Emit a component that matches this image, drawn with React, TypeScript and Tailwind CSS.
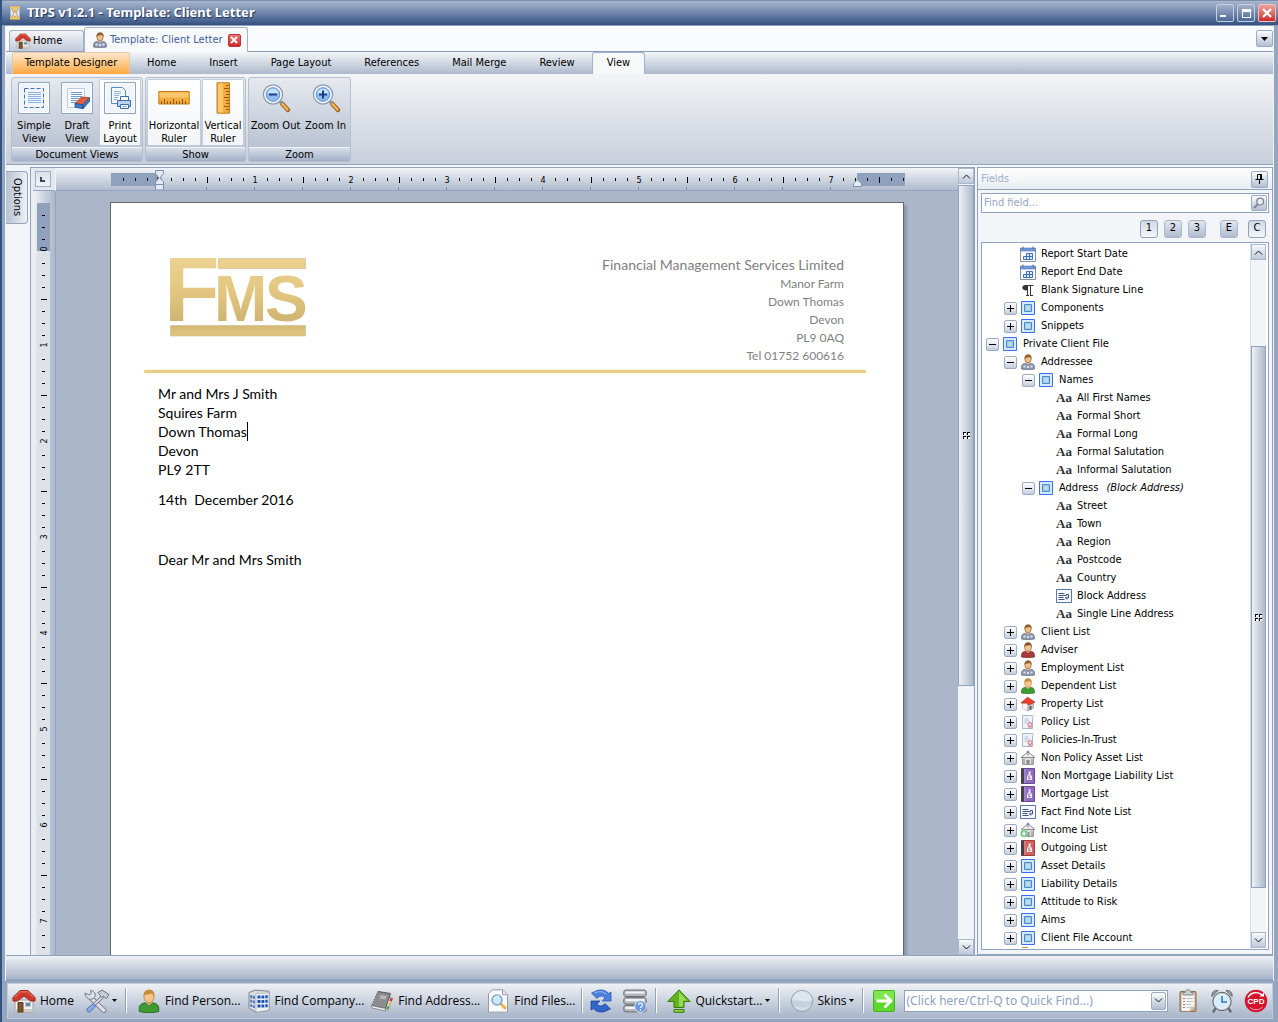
import React from 'react';

const UI = 'font-["DejaVu_Sans_Condensed","DejaVu_Sans",sans-serif]';
const SMALL_BTN =
  'flex shrink-0 items-center justify-center rounded-[2px] border border-[#9aabc6] bg-linear-to-b from-[#fbfcfd] to-[#b3bfd2]';

/* ---------- icons ---------- */

type IconProps = { className?: string };

const HomeIcon = ({ className }: IconProps) => (
  <svg viewBox="0 0 24 24" className={className} aria-hidden="true">
    <path d="M3 11h18v12H3z" fill="#f3f1ee" stroke="#a49e98" />
    <path d="M3 20h18v3H3z" fill="#cfcbc6" />
    <path d="M6 13.500h5V23H6z" fill="#7b5630" stroke="#5b3d1e" />
    <path d="M13.500 13.500h5v4h-5z" fill="#5f86ad" stroke="#c7c7c7" />
    <path d="M1 8.500 8 1.500h8l7 7v3.500h-4.500L12 7l-6.500 5H1z" fill="#d0392a" stroke="#9c2419" />
    <path d="M2.500 8.500 8.500 2.800h7l6 5.700" fill="none" stroke="#ef8476" />
  </svg>
);

const PersonIcon = ({ className, body, edge, hair = '#9a6a3a' }: IconProps & { body: string; edge: string; hair?: string }) => (
  <svg viewBox="0 0 16 16" className={className} aria-hidden="true">
    <path d="M1.500 15v-2c0-2.500 2-3.500 4-3.800L8 11l2.500-1.800c2 .3 4 1.300 4 3.800v2c-3 1-10 1-13 0z" fill={body} stroke={edge} strokeWidth=".6" />
    <path d="M6.200 8h3.600l-.3 1.800L8 11 6.500 9.800z" fill="#e2ac70" />
    <ellipse cx="8" cy="5" rx="3.400" ry="4.200" fill="#f0c58f" stroke={hair} strokeWidth=".6" />
    <path d="M4.500 5.200C4.100 2 5.800.4 8.200.5c2.600 0 3.800 1.800 3.300 4.700-.5-1.500-1.300-2-2.300-2.200-1.500.8-3 .6-3.600.7z" fill={hair} />
  </svg>
);

const ClientIcon = ({ className }: IconProps) => (
  <svg viewBox="0 0 16 16" className={className} aria-hidden="true">
    <path d="M1.500 15v-2c0-2.500 2-3.500 4-3.800L8 11l2.500-1.800c2 .3 4 1.300 4 3.800v2c-3 1-10 1-13 0z" fill="#8a96b0" stroke="#6f788c" strokeWidth=".8" />
    <path d="M6.200 8h3.600L8 11z" fill="#e2ac70" />
    <ellipse cx="8" cy="4.800" rx="3.200" ry="4" fill="#eec08c" stroke="#94602f" strokeWidth=".7" />
    <path d="M4.500 5.200C4.100 2 5.800.4 8.200.5c2.600 0 3.800 1.800 3.300 4.700-.5-1.500-1.300-2-2.300-2.200-1.500.8-3 .6-3.600.7z" fill="#94602f" />
    <path d="M3.500 11.500h2v2h-2zM7 12h2v2H7zM10.500 11.500h2v2h-2z" fill="#dfe6f2" />
  </svg>
);

const BoxIcon = ({ className }: IconProps) => (
  <svg viewBox="0 0 16 16" className={className} aria-hidden="true">
    <path d="M1.500 1.500h13v13h-13z" fill="#d5eafb" stroke="#3c6cf0" />
    <path d="M4.500 4.500h7v7h-7z" fill="#9cc8ec" stroke="#4c8cc0" />
    <path d="M6 6h4v4H6z" fill="#b9daf3" />
  </svg>
);

const CalendarIcon = ({ className }: IconProps) => (
  <svg viewBox="0 0 16 16" className={className} aria-hidden="true">
    <path d="M.5 2.500h15v13H.5z" fill="#fbfbfb" stroke="#8a8f98" />
    <path d="M.5 2h15v3H.5z" fill="#6f97dc" stroke="#5278bb" strokeWidth=".6" />
    <path d="M3 .5v2.500M13 .5v2.500" stroke="#666" />
    <path d="M3.500 10.500h3v3h-3zM6.500 7.500h3v3h-3zM6.500 10.500h3v3h-3zM9.500 7.500h3v3h-3zM9.500 10.500h3v3h-3z" fill="#dcebfb" stroke="#3f6fb4" />
  </svg>
);

const PilcrowIcon = ({ className }: IconProps) => (
  <svg viewBox="0 0 16 16" className={className} aria-hidden="true">
    <path d="M7 3C3.500 2.500 2 4 2.300 6c.3 1.800 2.200 2.600 4.700 2.400z" fill="#33363f" />
    <path d="M6 3.500h7.500M7.500 3.500v10M10.500 3.500v10M6 13.500h3M10 13.500h3" fill="none" stroke="#33363f" />
  </svg>
);

const TextIcon = () => (
  <span className='w-4 shrink-0 text-center font-["Liberation_Serif",serif] text-[13px] leading-4 font-bold text-[#2b3138]'>Aa</span>
);

const NoteIcon = ({ className }: IconProps) => (
  <svg viewBox="0 0 16 16" className={className} aria-hidden="true">
    <path d="M.5 1.500h15v13H.5z" fill="#f5f8fd" stroke="#5a75ab" />
    <path d="M2.500 5.500h6M2.500 7.500h8M2.500 9.500h5M2.500 11.500h6" stroke="#43527a" />
    <path d="M10 6.500h2.500v3.500H9.500M11 8.500 9.500 10l1.500 1.500" fill="none" stroke="#43527a" />
  </svg>
);

const PropertyIcon = ({ className }: IconProps) => (
  <svg viewBox="0 0 16 16" className={className} aria-hidden="true">
    <path d="M2.500 7v5.500L8 15V8z" fill="#f4f4f4" stroke="#aaa" strokeWidth=".6" />
    <path d="M8 8v7l5.500-2.800V6.500z" fill="#c9c9c9" stroke="#999" strokeWidth=".6" />
    <path d="M1 7 7.500 1.200 15 6l-6 3-2.500-2z" fill="#e8402c" stroke="#b22414" strokeWidth=".6" />
    <path d="M9.500 10.500l2-.8v3.500l-2 .8z" fill="#555" />
  </svg>
);

const PolicyIcon = ({ className }: IconProps) => (
  <svg viewBox="0 0 16 16" className={className} aria-hidden="true">
    <path d="M2.500 1.500h10c1.500 0 1 2 0 2.500v10.500h-10z" fill="#edf3f9" stroke="#a9b8cb" />
    <path d="M4.500 5h4M4.500 7h5M4.500 9h3" stroke="#b4c2d6" />
    <circle cx="10" cy="10.500" r="2" fill="#f6dada" stroke="#d8707a" />
    <path d="M9 12.500v2M11 12.500v2" stroke="#d8707a" />
  </svg>
);

const BankIcon = ({ className, plus }: IconProps & { plus?: boolean }) => (
  <svg viewBox="0 0 16 16" className={className} aria-hidden="true">
    <path d="M2.500 7.500h11v7h-11z" fill="#dedede" stroke="#9b9b9b" />
    <path d="M1 7.500 8 2l7 5.500z" fill="#ececec" stroke="#8c8c8c" />
    <path d="M4 9v5M12 9v5" stroke="#888" />
    <path d="M6.500 10h3v4.500h-3z" fill="#8b8b8b" />
    <path d="M8 5.500V1M6.300 2.500 8 .8l1.700 1.700" fill="none" stroke="#7287ad" />
    {plus && (
      <>
        <circle cx="4" cy="11.500" r="3.700" fill="#58bf78" stroke="#d9f2df" strokeWidth=".6" />
        <path d="M4 9.300v4.400M1.800 11.500h4.400" stroke="#fff" strokeWidth="1.400" />
      </>
    )}
  </svg>
);

const BookIcon = ({ className, fill, edge }: IconProps & { fill: string; edge: string }) => (
  <svg viewBox="0 0 16 16" className={className} aria-hidden="true">
    <path d="M1.500.5h13v15h-13z" fill={fill} stroke={edge} />
    <path d="M1 .5h3v15H1z" fill="#45404c" />
    <path d="M5 1v14" stroke="#fff" strokeOpacity=".35" />
    <path d="M8.500 3.500H11l-.8 2.500c1.600 1 2.300 3 1.800 6H7c-.3-3 .3-5 1.800-6z" fill="#f4eef8" />
    <path d="M10.300 8c-1.500-.5-1.700.6-1.300 1.300.3.700 0 1.200-.3 1.400h2" fill="none" stroke={edge} strokeWidth=".8" />
  </svg>
);

const PageFrame = ({ children }: { children: React.ReactNode }) => (
  <svg viewBox="0 0 32 32" className="size-8" aria-hidden="true">
    <path d="M.5.5h31v31H.5z" fill="#f1f5fa" stroke="#8fa5c2" />
    <path d="M1.500 1.500h29v29h-29z" fill="none" stroke="#fff" />
    {children}
  </svg>
);

const SimpleViewIcon = () => (
  <PageFrame>
    <path d="M6.500 6.500h19v19h-19z" fill="none" stroke="#3f74b5" strokeDasharray="4 2" />
    <path d="M10 10.500h13M10 12.500h13M10 14.500h13M10 16.500h13M10 18.500h13M10 20.500h13" stroke="#8bb4e2" />
  </PageFrame>
);

const DraftViewIcon = () => (
  <PageFrame>
    <path d="M6.500 6.500h17v19h-17z" fill="#fafcff" stroke="#b8cce4" />
    <path d="M10 10.500h11M10 12.500h11M10 14.500h11M10 16.500h8M10 18.500h6M10 20.500h5" stroke="#6f9cd4" />
    <path d="M14 21.500 20.500 15l8 .8-6.500 7z" fill="#e4603c" stroke="#98321a" strokeWidth=".8" />
    <path d="M14 21.500l8 1.200v4l-8-1.500zM22 22.700l6.500-7v3.800L22 26.700z" fill="#3a7cc4" stroke="#1f4f8b" strokeWidth=".8" />
  </PageFrame>
);

const PrintLayoutIcon = () => (
  <PageFrame>
    <path d="M7.500 5.500h11l3 3v13h-14z" fill="#f6faff" stroke="#5c8ac4" />
    <path d="M10 9.500h7M10 11.500h7M10 13.500h5M10 15.500h4M10 17.500h3" stroke="#8bb4e2" />
    <path d="M16.500 14.500h8v5h-8z" fill="#fff" stroke="#3d6cab" />
    <path d="M13.500 18.500h13v6h-13z" fill="#bdd4ef" stroke="#3d6cab" />
    <path d="M16.500 22.500h8v4h-8z" fill="#fff" stroke="#3d6cab" />
    <path d="M18 24.500h5" stroke="#8bb4e2" />
  </PageFrame>
);

const HRulerIcon = () => (
  <svg viewBox="0 0 32 32" className="size-8" aria-hidden="true">
    <path d="M.8 9.500h30.400v12.500H.8z" fill="#f4ac3c" stroke="#c47a1a" />
    <path d="M1.500 10.500h29v5h-29z" fill="#fbc76c" />
    <path d="M3.500 22v-3M6.500 22v-5M9.500 22v-3M12.500 22v-3M15.500 22v-5M18.500 22v-3M21.500 22v-3M24.500 22v-5M27.500 22v-3" stroke="#94580c" />
  </svg>
);

const VRulerIcon = () => (
  <svg viewBox="0 0 32 32" className="size-8" aria-hidden="true">
    <path d="M10 .8h12.500v30.400H10z" fill="#f4ac3c" stroke="#c47a1a" />
    <path d="M11 1.500h5v29h-5z" fill="#fbc76c" />
    <path d="M22 3.500h-3M22 6.500h-5M22 9.500h-3M22 12.500h-3M22 15.500h-5M22 18.500h-3M22 21.500h-3M22 24.500h-5M22 27.500h-3" stroke="#94580c" />
  </svg>
);

const ZoomIcon = ({ plus }: { plus?: boolean }) => (
  <svg viewBox="0 0 32 32" className="size-8" aria-hidden="true">
    <path d="M22 21.500l6 6.500" stroke="#9b6220" strokeWidth="4.400" strokeLinecap="round" />
    <path d="M22 21.500l5.500 6" stroke="#f5b95c" strokeWidth="2.400" strokeLinecap="round" />
    <path d="M19 18.500l3 3" stroke="#8d93a0" strokeWidth="3" />
    <circle cx="13" cy="12.500" r="9.600" fill="#f4f7fb" stroke="#8a97ad" strokeWidth="1.200" />
    <circle cx="13" cy="12.500" r="6.800" fill="#8cbcf2" stroke="#5f8fd0" />
    <path d="M7.300 11a6 6 0 0 1 11.400 0c-4 1.500-8 1.500-11.400 0z" fill="#c5e0fc" />
    <path d={plus ? 'M9 12.500h8M13 8.500v8' : 'M9 12.500h8'} stroke="#1f3c80" strokeWidth="2" />
  </svg>
);

const ToolsIcon = ({ className }: IconProps) => (
  <svg viewBox="0 0 26 24" className={className} aria-hidden="true">
    <path d="M8 10l12 11.500" stroke="#707680" strokeWidth="5" strokeLinecap="round" />
    <path d="M8 10l12 11.500" stroke="#dde1e6" strokeWidth="3.200" strokeLinecap="round" />
    <path d="M6.500 1.500c3 0 5.500 2.500 4.500 6-1 2.800-5 3.500-7.500 1.700C1.500 7.500 1 5.500 1.200 4l3.800 2 2.200-1.500z" fill="#dde1e6" stroke="#707680" />
    <path d="M19 7.500 9 16.500" stroke="#707680" strokeWidth="3.200" />
    <path d="M19 7.500 9 16.500" stroke="#eceef1" strokeWidth="1.600" />
    <path d="M14 3.500 18 1l7 4.500-2.500 4-3.500-2.500-1.500 1.500z" fill="#c9cdd3" stroke="#70767e" />
    <path d="M9.500 14.500l2 2.500-5 5.500c-2 1.500-4.500-.5-3.500-2.500z" fill="#84aef0" stroke="#4d6fae" />
  </svg>
);

const CompanyIcon = ({ className }: IconProps) => (
  <svg viewBox="0 0 24 24" className={className} aria-hidden="true">
    <path d="M2 3.500 8 1.200l14 1v19l-13 2-7-4z" fill="#d9dce0" stroke="#80858d" />
    <path d="M9 4.500 22 4v17.200l-13 2z" fill="#eef0f2" stroke="#9a9fa7" strokeWidth=".6" />
    <path d="M10.500 6.500h3v3h-3zM14.500 6.400h2.800v3h-2.800zM18.300 6.300h2.400v3h-2.400zM10.500 11h3v3h-3zM14.500 10.900h2.800v3h-2.800zM18.300 10.700h2.400v3h-2.400zM10.500 15.500h3v3h-3zM14.500 15.400h2.800v3h-2.800zM18.300 15.200h2.400v3h-2.400z" fill="#1d50b4" />
    <path d="M3.300 6l1.900.4v3l-1.900-.5zM5.900 6.700l1.900.4v3l-1.900-.6zM3.300 10.500l1.900.5v3l-1.900-.7zM5.900 11.300l1.900.4v3l-1.900-.6zM3.300 15l1.900.7v2.500l-1.900-.7zM5.900 16l1.900.7v2.500l-1.900-.7z" fill="#4773bd" />
  </svg>
);

const AddressIcon = ({ className }: IconProps) => (
  <svg viewBox="0 0 24 24" className={className} aria-hidden="true">
    <path d="M18 8l5 1-5.500 12-2-1z" fill="#e9e9e9" stroke="#9b9b9b" strokeWidth=".8" />
    <path d="M20.300 9l2.500.4-1.300 3-2.300-.6z" fill="#d23c2a" />
    <path d="M19 13l2.300.5-1.300 3-2.100-.8z" fill="#f0c02c" />
    <path d="M17.600 17l2.100.6-1.500 3.200-2-.8z" fill="#3ea04a" />
    <path d="M8 2.500 20.500 4.500 15.500 19.500 1.500 16.500z" fill="#8b8d90" stroke="#55585c" />
    <path d="M1.500 16.500l14 3v2.500L2 19z" fill="#f2f2f2" stroke="#77797c" strokeWidth=".8" />
    <path d="M10.500 6l6 1-1 3.500-6-1z" fill="#b4b6b9" />
    <path d="M7 3 1.500 16" stroke="#d8d8d8" strokeWidth="1.500" strokeDasharray="1.500 1.200" />
  </svg>
);

const FilesIcon = ({ className }: IconProps) => (
  <svg viewBox="0 0 24 24" className={className} aria-hidden="true">
    <path d="M6.500.8h10l5 5v17.400h-19V4.800z" fill="#f8f9fa" stroke="#989ca3" />
    <path d="M16.500.8v5h5" fill="#dfe2e6" stroke="#989ca3" />
    <path d="M14.500 14.500l4.500 4.500" stroke="#edb548" strokeWidth="3" strokeLinecap="round" />
    <circle cx="11" cy="11" r="5" fill="#c6e6fa" stroke="#7fa8cc" strokeWidth="1.600" />
    <path d="M8 10a3.500 3.500 0 0 1 5-2.500" fill="none" stroke="#fff" />
  </svg>
);

const RefreshIcon = ({ className }: IconProps) => (
  <svg viewBox="0 0 24 24" className={className} aria-hidden="true">
    <path d="M2.500 4 6 2.500C11-.3 17 1 19.500 4.500L22 3v9h-9l3-3c-2-2.800-6-2.500-8 .5z" fill="#4a80dc" stroke="#2c5cb4" strokeWidth=".8" />
    <path d="M21.500 20 18 21.500C13 24.300 7 23 4.500 19.500L2 21v-9h9l-3 3c2 2.800 6 2.500 8-.5z" fill="#2f66c8" stroke="#1d4796" strokeWidth=".8" />
    <path d="M5.500 4c4-2 9-2 12 1.500" fill="none" stroke="#9bbcf2" />
  </svg>
);

const DatabaseIcon = ({ className }: IconProps) => (
  <svg viewBox="0 0 24 24" className={className} aria-hidden="true">
    <rect x=".8" y="1" width="22.400" height="6.500" rx="2" fill="#b4b8bd" stroke="#686c73" />
    <rect x=".8" y="8.700" width="22.400" height="6.500" rx="2" fill="#b4b8bd" stroke="#686c73" />
    <rect x=".8" y="16.400" width="22.400" height="6.500" rx="2" fill="#b4b8bd" stroke="#686c73" />
    <path d="M2.500 3.500h19M2.500 11.200h19M2.500 18.900h19" stroke="#f3f4f5" strokeWidth="2.200" />
    <circle cx="17.500" cy="17.500" r="5.800" fill="#6a98e0" stroke="#dfe9fa" />
    <path d="M15.500 16c0-2.500 4-2.500 4 0 0 1.500-2 1.500-2 3M17.500 20v1.500" fill="none" stroke="#fff" strokeWidth="1.300" />
  </svg>
);

const UpIcon = ({ className }: IconProps) => (
  <svg viewBox="0 0 24 24" className={className} aria-hidden="true">
    <path d="M12 .8 23.200 12.500H17V18.500H7V12.500H.8z" fill="#62b41c" stroke="#3b7d0c" />
    <path d="M12 2.800 20 11.500h-4v6h-4z" fill="#9cd85a" />
    <path d="M7 20.500h10v2.800H7z" fill="#8fd144" stroke="#3b7d0c" />
  </svg>
);

const SphereIcon = ({ className }: IconProps) => (
  <svg viewBox="0 0 24 24" className={className} aria-hidden="true">
    <circle cx="12" cy="12" r="10.700" fill="#c3d2dc" stroke="#94a6b4" />
    <path d="M2 11.500C3 5 8 2 12 2c5 0 9.500 4 10 9-6 4-14-1-20 .5z" fill="#dce7ed" />
    <path d="M4 17c4 5 12 5 16 0-5 2-11 2-16 0z" fill="#d6e3ea" />
  </svg>
);

const GoIcon = ({ className }: IconProps) => (
  <svg viewBox="0 0 24 24" className={className} aria-hidden="true">
    <rect x="1.500" y="1.500" width="21" height="21" rx="1" fill="#5cd82c" stroke="#48b01c" />
    <path d="M2 2h20v9H2z" fill="#7fe650" />
    <path d="M4.500 12h14M12.500 5.500 19 12l-6.500 6.500" fill="none" stroke="#fff" strokeWidth="2.800" />
  </svg>
);

const ClipboardIcon = ({ className }: IconProps) => (
  <svg viewBox="0 0 24 24" className={className} aria-hidden="true">
    <rect x="4" y="2.500" width="16" height="20" rx="1" fill="#c4a182" stroke="#8e6a48" />
    <path d="M5.500 4.500h13V18l-4 4h-9z" fill="#f6f6f5" stroke="#d6d2cc" strokeWidth=".6" />
    <path d="M9 3.500c0-3.500 6-3.500 6 0h2v2.500H7V3.500z" fill="#c9ccd0" stroke="#878b90" />
    <path d="M7 9.500h2M7 12.500h2M7 15.500h2M7 18.500h2" stroke="#da6b5e" />
    <path d="M10.500 9.500H17M10.500 12.500H17M10.500 15.500H15M10.500 18.500h3" stroke="#b8bcc2" />
    <path d="M14.500 22v-4h4z" fill="#dcdcda" stroke="#a6a29c" strokeWidth=".6" />
  </svg>
);

const ClockIcon = ({ className }: IconProps) => (
  <svg viewBox="0 0 24 24" className={className} aria-hidden="true">
    <path d="M5.500 19.500 3.500 22.500M18.500 19.500 20.500 22.500" stroke="#666b72" strokeWidth="2.400" strokeLinecap="round" />
    <path d="M2 7.500C1.500 3.500 4 .8 8 1.500zM22 7.500C22.500 3.500 20 .8 16 1.500z" fill="#9a9fa6" stroke="#5f646b" />
    <circle cx="12" cy="12.500" r="9.200" fill="#c2c7cc" stroke="#62676e" />
    <circle cx="12" cy="12.500" r="7.300" fill="#d4edff" stroke="#eef7fd" />
    <path d="M12 7v6h5" fill="none" stroke="#3878b4" strokeWidth="1.600" />
  </svg>
);

const CpdIcon = ({ className }: IconProps) => (
  <svg viewBox="0 0 24 24" className={className} aria-hidden="true">
    <circle cx="12" cy="12" r="11.200" fill="#d4142c" />
    <path d="M4 8.500a9 9 0 0 1 14.500-2" fill="none" stroke="#fff" strokeWidth="1.400" />
    <path d="M15.500 7.500h4.500V3.500z" fill="#fff" />
    <path d="M6 18.500a9 9 0 0 0 12.500-.5" fill="none" stroke="#f49aa6" strokeWidth="1" />
    <text x="12" y="15" textAnchor="middle" fontFamily="Liberation Sans, sans-serif" fontSize="8" fontWeight="700" fill="#fff">CPD</text>
  </svg>
);

const HourglassIcon = ({ className }: IconProps) => (
  <svg viewBox="0 0 12 14" className={className} aria-hidden="true">
    <path d="M1.500 1.500h9v11h-9z" fill="#dbe8f9" />
    <path d="M2.500 2h7L6.800 7l2.700 5h-7l2.700-5z" fill="#fff" stroke="#8d6b2a" strokeWidth=".7" />
    <path d="M4 3.500h4L6 7zM3.500 11.500h5L6 9z" fill="#e9a82c" />
    <path d="M1 1.500h10M1 12.500h10" stroke="#f2c65a" strokeWidth="1.800" />
  </svg>
);

const Caret = ({ className = 'h-[3px] w-[5px]' }: IconProps) => (
  <svg viewBox="0 0 6 3" className={className} preserveAspectRatio="none" aria-hidden="true">
    <path d="M0 0h6L3 3z" fill="#000" />
  </svg>
);

const Chevron = ({ up }: { up?: boolean }) => (
  <svg viewBox="0 0 9 5" className="h-[5px] w-[9px]" aria-hidden="true">
    <path d={up ? 'M1 4.500 4.500 1 8 4.500' : 'M1 .5 4.500 4 8 .5'} fill="none" stroke="#111" />
  </svg>
);

const SearchIcon = ({ className }: IconProps) => (
  <svg viewBox="0 0 12 12" className={className} aria-hidden="true">
    <circle cx="7.200" cy="4.600" r="3.400" fill="#e9edf2" stroke="#7c8288" strokeWidth="1.200" />
    <path d="M4.700 7.300 1 11" stroke="#7c8288" strokeWidth="1.800" />
  </svg>
);

const PinIcon = () => (
  <svg viewBox="0 0 9 10" className="h-[10px] w-[9px]" aria-hidden="true">
    <path d="M2.500.5h4v5h-4zM.5 5.500h8M4.500 5.500V10" fill="none" stroke="#000" />
    <path d="M5 .5h2v5H5z" fill="#000" />
  </svg>
);

/* ---------- window frame ---------- */

function TitleBar() {
  const btn =
    'flex size-[18px] items-center justify-center rounded-[2px] border border-[#c3cfe2] bg-linear-to-b from-[#a3b2cb] to-[#4e6a97]';
  return (
    <header className="flex h-[26px] shrink-0 items-center border-t border-b border-t-[#7d8fae] border-b-[#8ea0bd] bg-linear-to-b from-[#a9b6cd] via-[#6f86ab] via-50% to-[#34527f] pr-[2px] pl-[7px]">
      <HourglassIcon className="h-[14px] w-3" />
      <h1 className='ml-1.5 grow font-["Noto_Sans",sans-serif] text-[13px] font-bold text-white [text-shadow:1px_1px_1px_#1f3560]'>
        TIPS v1.2.1 - Template: Client Letter
      </h1>
      <div className="flex gap-[3px]">
        <button className={btn} aria-label="Minimize">
          <span className="mt-1.5 mr-1 h-0.5 w-1.5 bg-white" />
        </button>
        <button className={btn} aria-label="Maximize">
          <span className="h-[9px] w-[9px] border border-t-[3px] border-white" />
        </button>
        <button
          className="flex size-[18px] items-center justify-center rounded-[2px] border border-[#eec3c5] bg-linear-to-b from-[#eda29c] to-[#cb2626]"
          aria-label="Close"
        >
          <svg viewBox="0 0 10 10" className="size-2.5" aria-hidden="true">
            <path d="M1 1l8 8M9 1 1 9" stroke="#fff" strokeWidth="2.300" />
          </svg>
        </button>
      </div>
    </header>
  );
}

function DocumentTabs() {
  return (
    <nav className="flex h-[26px] shrink-0 items-end border-b border-[#8c9ebb] bg-[#fafbfd] pl-[3px]">
      <button className="flex h-[21px] w-[75px] items-center gap-0.5 rounded-t-[3px] border border-b-0 border-[#a3b2ca] bg-linear-to-b from-[#f3f5f8] to-[#c1cad9] pl-[5px] text-[11px]">
        <HomeIcon className="size-4" />
        Home
      </button>
      <div className="-mb-px flex h-[25px] items-center rounded-t-[3px] border border-b-0 border-[#a3b2ca] bg-[#f8f9fb] pr-1.5 pl-[7px]">
        <button className="flex items-center gap-0.5 text-[11px] text-[#3f5f96]">
          <ClientIcon className="size-4" />
          Template: Client Letter
        </button>
        <button className="ml-[5px] flex size-[13px] items-center justify-center rounded-[2px] border border-[#c03236] bg-linear-to-b from-[#ee7670] to-[#cc2428]" aria-label="Close tab">
          <svg viewBox="0 0 8 8" className="size-2" aria-hidden="true">
            <path d="M1 1l6 6M7 1 1 7" stroke="#fff" strokeWidth="1.800" />
          </svg>
        </button>
      </div>
      <button className={`${SMALL_BTN} mb-1 ml-auto size-[17px]`} aria-label="Open documents">
        <Caret className="h-1 w-[7px]" />
      </button>
    </nav>
  );
}

const RIBBON_TABS = ['Home', 'Insert', 'Page Layout', 'References', 'Mail Merge', 'Review'];

function RibbonTabs() {
  return (
    <nav className="flex h-[22px] shrink-0 items-stretch gap-px bg-linear-to-b from-[#f4f6f9] to-[#aeb9cc] pl-1.5 text-[11px]">
      <button className="w-[118px] rounded-t-[2px] border border-b-0 border-[#e4c9a4] bg-linear-to-b from-[#fde5cc] via-[#fdc986] to-[#fea63a]">
        Template Designer
      </button>
      {RIBBON_TABS.map((t) => (
        <button key={t} className="px-4">
          {t}
        </button>
      ))}
      <button className="rounded-t-[3px] border border-b-0 border-[#a3b2ca] bg-[#f7f8fa] px-3.5">View</button>
    </nav>
  );
}

function RibbonGroup({ title, children }: { title: string; children: React.ReactNode }) {
  return (
    <section className="flex flex-col rounded-[3px] border border-[#b4c0d2] bg-linear-to-b from-[#e6e9ee] to-[#b2bccd]">
      <div className="flex grow items-start gap-px px-px pt-px">{children}</div>
      <h2 className="flex h-3.5 items-center justify-center border-t border-[#f0f2f6] bg-linear-to-b from-[#d8dee7] to-[#a3b1c8] text-[11px] leading-3">
        {title}
      </h2>
    </section>
  );
}

function RibbonButton({ icon, lines, selected, width }: { icon: React.ReactNode; lines: string[]; selected?: boolean; width: string }) {
  return (
    <button
      aria-pressed={selected}
      className={`flex h-[67px] flex-col items-center rounded-[2px] border pt-0.5 ${width} ${
        selected ? 'border-[#c3ccda] bg-linear-to-b from-white to-[#f3f5f8]' : 'border-transparent'
      }`}
    >
      {icon}
      <span className="mt-[5px] text-[11px] leading-[13px] whitespace-nowrap">
        {lines.map((l) => (
          <span key={l} className="block">
            {l}
          </span>
        ))}
      </span>
    </button>
  );
}

function Ribbon() {
  return (
    <div className="flex h-[91px] shrink-0 items-stretch gap-0.5 border-b border-[#8fa2be] bg-linear-to-b from-[#f3f4f6] to-[#c8cfdb] px-[5px] pt-[3px] pb-0.5">
      <RibbonGroup title="Document Views">
        <RibbonButton width="w-[42px]" icon={<SimpleViewIcon />} lines={['Simple', 'View']} />
        <RibbonButton width="w-[42px]" icon={<DraftViewIcon />} lines={['Draft', 'View']} />
        <RibbonButton width="w-[42px]" icon={<PrintLayoutIcon />} lines={['Print', 'Layout']} selected />
      </RibbonGroup>
      <RibbonGroup title="Show">
        <RibbonButton width="w-[54px]" icon={<HRulerIcon />} lines={['Horizontal', 'Ruler']} selected />
        <RibbonButton width="w-[42px]" icon={<VRulerIcon />} lines={['Vertical', 'Ruler']} selected />
      </RibbonGroup>
      <RibbonGroup title="Zoom">
        <RibbonButton width="w-[51px]" icon={<ZoomIcon />} lines={['Zoom Out']} />
        <RibbonButton width="w-[47px]" icon={<ZoomIcon plus />} lines={['Zoom In']} />
      </RibbonGroup>
    </div>
  );
}

/* ---------- editor ---------- */

const H_TICKS = Array.from({ length: 66 }, (_, i) => i - 3);
const V_TICKS = Array.from({ length: 62 }, (_, i) => i - 3);

function HorizontalRuler() {
  return (
    <div className="h-[23px] overflow-hidden border-b border-[#93a5c0] bg-linear-to-b from-[#f2f4f7] to-[#b0bbcd] pt-[5px] pl-[55px]">
      <div className="relative w-[794px]">
        <div className="flex h-[13px] items-center bg-[linear-gradient(90deg,#8fa1bc_48px,transparent_48px,transparent_746px,#8fa1bc_746px)] pl-1.5">
          {H_TICKS.map((n) => (
            <span key={n} className="flex w-3 shrink-0 justify-center text-[9px] leading-3">
              {n % 8 === 0 ? n / 8 : <span className={n % 4 === 0 ? 'h-1.5 w-px bg-black' : 'h-[3px] w-px bg-black'} />}
            </span>
          ))}
        </div>
        <div className="mt-px flex h-[3px] pl-12">
          {H_TICKS.slice(0, 14).map((n) => (
            <span key={n} className="w-12 border-r border-[#7d92b3]" />
          ))}
        </div>
        <svg viewBox="0 0 9 21" className="absolute -top-[3px] left-11 h-[21px] w-[9px]" aria-hidden="true">
          <path d="M.5.5h8v3l-3.500 4.500 3.500 4v8h-8v-8l3.500-4L.5 3.500zM.5 14.500h8" fill="#e6eaf0" stroke="#7a90b2" />
        </svg>
        <svg viewBox="0 0 9 8" className="absolute top-[6px] left-[742px] h-2 w-[9px]" aria-hidden="true">
          <path d="M.5 7.500v-3L4.500.7l4 3.800v3z" fill="#e6eaf0" stroke="#7a90b2" />
        </svg>
      </div>
    </div>
  );
}

function VerticalRuler() {
  return (
    <div className="flex w-[22px] shrink-0 flex-col overflow-hidden bg-linear-to-r from-[#f0f2f6] to-[#aab7cb] pt-3 pr-[5px] pl-1">
      <div className="flex h-0 grow flex-col overflow-hidden bg-[linear-gradient(180deg,#8fa1bc_48px,#dde2ea_48px)] pt-1.5">
        {V_TICKS.map((n) => (
          <span key={n} className="flex h-3 shrink-0 items-center justify-center text-[9px] leading-3">
            {n % 8 === 0 ? (
              <span className="mb-1 -rotate-90">{n / 8}</span>
            ) : (
              <span className={n % 4 === 0 ? 'h-px w-1.5 bg-black' : 'h-px w-[3px] bg-black'} />
            )}
          </span>
        ))}
      </div>
    </div>
  );
}

function Grip() {
  return (
    <span className="grid grid-cols-2 gap-px">
      {[0, 1, 2, 3].map((i) => (
        <span key={i} className="size-[3px] border-t border-l border-black bg-white" />
      ))}
    </span>
  );
}

const SCROLL_BTN = 'flex h-4 shrink-0 items-center justify-center border border-[#a9b7cd] bg-linear-to-b from-[#f8f9fb] to-[#bfc9d9]';

function FmsLogo() {
  return (
    <svg viewBox="0 0 136 79" className="h-[79px] w-[136px] shrink-0" role="img" aria-label="FMS">
      <defs>
        <linearGradient id="gold" x1="0" y1="0" x2="0" y2="79" gradientUnits="userSpaceOnUse">
          <stop offset="0" stopColor="#ecd190" />
          <stop offset="0.45" stopColor="#e2c67f" />
          <stop offset="0.8" stopColor="#cfb472" />
          <stop offset="1" stopColor="#e3c780" />
        </linearGradient>
      </defs>
      <g fill="url(#gold)" fontFamily="Liberation Sans, Arial, sans-serif" fontWeight="700">
        <path d="M48.500.5h87v10h-87zM.5 67.500h135v10.500H.5z" stroke="#cdb98a" strokeWidth=".6" />
        <text x="-6" y="63" fontSize="91">F</text>
        <text x="44" y="63" fontSize="64">M</text>
        <text x="95" y="63" fontSize="64">S</text>
      </g>
    </svg>
  );
}

function DocumentPage() {
  return (
    <article className='flex w-[794px] flex-none flex-col border border-b-0 border-[#686868] bg-white font-["Lato",sans-serif] shadow-[3px_3px_2px_#8b98ad]'>
      <div className="flex justify-between pt-[53px] pr-[59px] pl-[59px]">
        <div className="pt-0.5">
          <FmsLogo />
        </div>
        <address className="text-right text-[12px] leading-[18px] text-[#7f7f7f] not-italic">
          <div className="mb-px text-[14px]">Financial Management Services Limited</div>
          <div>Manor Farm</div>
          <div>Down Thomas</div>
          <div>Devon</div>
          <div>PL9 0AQ</div>
          <div>Tel 01752 600616</div>
        </address>
      </div>
      <hr className="mt-[5px] mr-[37px] ml-[33px] h-[3px] rounded border-0 bg-[#e9cf85] shadow-[0_0_2px_#f0dca4]" />
      <div className="pt-[11px] pl-[47px] text-[14px] leading-[19px] text-black">
        <p>Mr and Mrs J Smith</p>
        <p>Squires Farm</p>
        <p className="flex">
          Down Thomas
          <span className="w-px bg-black" />
        </p>
        <p>Devon</p>
        <p>PL9 2TT</p>
        <p className="mt-[11px] whitespace-pre">14th  December 2016</p>
        <p className="mt-[41px]">Dear Mr and Mrs Smith</p>
      </div>
    </article>
  );
}

function Editor() {
  return (
    <main className="flex min-w-0 grow overflow-hidden border-t border-r border-l border-[#8fa2be] bg-[#e9edf2] pl-0.5">
      <div className="flex min-w-0 grow flex-col">
        <div className="flex shrink-0">
          <div className="flex w-[22px] shrink-0 items-center justify-center border-b border-[#93a5c0] bg-[#e3e7ee] pr-[3px]">
            <button className="flex size-4 items-center justify-center border border-[#9fb0ca] bg-linear-to-b from-[#dbe1ea] to-[#f2f4f7]" aria-label="Tab stop">
              <span className="size-[5px] border-b-2 border-l-2 border-[#3b4a60]" />
            </button>
          </div>
          <div className="min-w-0 grow border-l border-[#f0f2f6]">
            <HorizontalRuler />
          </div>
        </div>
        <div className="flex min-h-0 grow">
          <VerticalRuler />
          <div className="flex min-w-0 grow overflow-hidden border-l border-[#93a5c0] bg-[#abb7c9] pt-[11px] pl-[54px]">
            <DocumentPage />
          </div>
        </div>
      </div>
      <div className="flex w-4 shrink-0 flex-col bg-[#f2f4f8]">
        <div className={SCROLL_BTN}>
          <Chevron up />
        </div>
        <div className="mt-px flex h-[501px] items-center justify-center border border-[#8fa2be] bg-linear-to-r from-[#eff2f6] to-[#adb9cc]">
          <Grip />
        </div>
        <div className={`${SCROLL_BTN} mt-auto`}>
          <Chevron />
        </div>
      </div>
    </main>
  );
}

/* ---------- fields panel ---------- */

type Kind = 'calendar' | 'pilcrow' | 'box' | 'client' | 'text' | 'note' | 'adviser' | 'dependent' | 'property' | 'policy' | 'bank' | 'purple' | 'income' | 'red';
type Row = { label: string; level: 0 | 1 | 2 | 3; icon: Kind; state?: 'open' | 'closed'; hint?: string };

const leaf = (label: string, icon: Kind = 'text'): Row => ({ label, level: 3, icon });
const closed = (label: string, icon: Kind): Row => ({ label, level: 1, icon, state: 'closed' });

const ROWS: Row[] = [
  { label: 'Report Start Date', level: 1, icon: 'calendar' },
  { label: 'Report End Date', level: 1, icon: 'calendar' },
  { label: 'Blank Signature Line', level: 1, icon: 'pilcrow' },
  closed('Components', 'box'),
  closed('Snippets', 'box'),
  { label: 'Private Client File', level: 0, icon: 'box', state: 'open' },
  { label: 'Addressee', level: 1, icon: 'client', state: 'open' },
  { label: 'Names', level: 2, icon: 'box', state: 'open' },
  leaf('All First Names'),
  leaf('Formal Short'),
  leaf('Formal Long'),
  leaf('Formal Salutation'),
  leaf('Informal Salutation'),
  { label: 'Address', level: 2, icon: 'box', state: 'open', hint: '(Block Address)' },
  leaf('Street'),
  leaf('Town'),
  leaf('Region'),
  leaf('Postcode'),
  leaf('Country'),
  leaf('Block Address', 'note'),
  leaf('Single Line Address'),
  closed('Client List', 'client'),
  closed('Adviser', 'adviser'),
  closed('Employment List', 'client'),
  closed('Dependent List', 'dependent'),
  closed('Property List', 'property'),
  closed('Policy List', 'policy'),
  closed('Policies-In-Trust', 'policy'),
  closed('Non Policy Asset List', 'bank'),
  closed('Non Mortgage Liability List', 'purple'),
  closed('Mortgage List', 'purple'),
  closed('Fact Find Note List', 'note'),
  closed('Income List', 'income'),
  closed('Outgoing List', 'red'),
  closed('Asset Details', 'box'),
  closed('Liability Details', 'box'),
  closed('Attitude to Risk', 'box'),
  closed('Aims', 'box'),
  closed('Client File Account', 'box'),
];

const S = 'size-4 shrink-0';
const ICONS: Record<Kind, React.ReactNode> = {
  calendar: <CalendarIcon className={S} />,
  pilcrow: <PilcrowIcon className={S} />,
  box: <BoxIcon className={S} />,
  client: <ClientIcon className={S} />,
  text: <TextIcon />,
  note: <NoteIcon className={S} />,
  adviser: <PersonIcon className={S} body="#a83a3a" edge="#6e2020" hair="#8a5228" />,
  dependent: <PersonIcon className={S} body="#3f9a34" edge="#246a1e" hair="#c78a3c" />,
  property: <PropertyIcon className={S} />,
  policy: <PolicyIcon className={S} />,
  bank: <BankIcon className={S} />,
  purple: <BookIcon className={S} fill="#8f6cc0" edge="#66479a" />,
  income: <BankIcon className={S} plus />,
  red: <BookIcon className={S} fill="#cf625c" edge="#a03c38" />,
};
const INDENT = ['pl-[3px]', 'pl-[21px]', 'pl-[39px]', 'pl-[57px]'];

function TreeRow({ row }: { row: Row }) {
  return (
    <li className={`flex h-[18px] shrink-0 items-center whitespace-nowrap ${INDENT[row.level]}`}>
      {row.state ? (
        <button
          className="mr-[3px] flex size-[13px] shrink-0 items-center justify-center rounded-[2px] border border-[#9dabc2] bg-linear-to-b from-white to-[#c6cedb]"
          aria-label={`${row.state === 'open' ? 'Collapse' : 'Expand'} ${row.label}`}
        >
          <svg viewBox="0 0 9 9" className="size-[9px]" aria-hidden="true">
            <path d={row.state === 'open' ? 'M1 4.500h7' : 'M1 4.500h7M4.500 1v7'} stroke="#000" />
          </svg>
        </button>
      ) : (
        <span className="w-4 shrink-0" />
      )}
      {ICONS[row.icon]}
      <span className="ml-[5px]">{row.label}</span>
      {row.hint && <em className="ml-2">{row.hint}</em>}
    </li>
  );
}

function FieldsPanel() {
  const toggle = 'flex size-[18px] items-center justify-center rounded-[3px] border text-[11px]';
  const off = 'border-[#a9b7cc] bg-linear-to-b from-[#e2e7ee] to-[#aebbcf]';
  const on = 'border-[#8fa2be] bg-linear-to-b from-[#cfd8e4] to-[#f6f8fa]';
  return (
    <aside className="ml-0.5 flex w-[296px] shrink-0 flex-col border border-[#8fa2be] bg-[#f3f5f8]">
      <div className="flex h-[22px] shrink-0 items-center justify-between border-b border-[#8fa2be] bg-linear-to-b from-white to-[#e9ecf1] pt-px pr-1 pl-[3px]">
        <h2 className="text-[11px] text-[#9fb1cf]">Fields</h2>
        <button className={`${SMALL_BTN} size-[17px]`} aria-label="Pin panel">
          <PinIcon />
        </button>
      </div>
      <div className="flex min-h-0 grow flex-col px-[3px] pb-1">
        <label className="mt-[3px] flex h-5 shrink-0 items-center border border-[#8fa2be] bg-white pr-px pl-0.5">
          <input className="min-w-0 grow text-[11px] outline-none placeholder:text-[#94a5c2]" placeholder="Find field..." aria-label="Find field" />
          <button className={`${SMALL_BTN} size-4`} aria-label="Search fields">
            <SearchIcon className="size-3" />
          </button>
        </label>
        <div className="flex h-[29px] shrink-0 items-center justify-end gap-1.5 pt-0.5 pr-[3px]">
          <button className={`${toggle} ${on}`} aria-pressed="true">1</button>
          <button className={`${toggle} ${off}`}>2</button>
          <button className={`${toggle} ${off}`}>3</button>
          <button className={`${toggle} ${off} ml-2`}>E</button>
          <button className={`${toggle} ${on} ml-1`} aria-pressed="true">C</button>
        </div>
        <div className="flex min-h-0 grow border border-[#8fa2be] bg-white p-px pr-0.5">
          <ul className="flex min-w-0 grow flex-col overflow-hidden pt-px text-[11px]">
            {ROWS.map((r) => (
              <TreeRow key={r.label} row={r} />
            ))}
            <li className="h-px shrink-0 pl-[39px]">
              <span className="block h-px w-1.5 bg-[#b79a3e]" />
            </li>
          </ul>
          <div className="flex w-4 shrink-0 flex-col border-l border-[#d7dde7] bg-[#f2f4f8]">
            <div className={SCROLL_BTN}>
              <Chevron up />
            </div>
            <div className="mt-[86px] flex h-[542px] items-center justify-center border border-[#8fa2be] bg-linear-to-r from-[#eff2f6] to-[#adb9cc]">
              <Grip />
            </div>
            <div className={`${SCROLL_BTN} mt-auto`}>
              <Chevron />
            </div>
          </div>
        </div>
      </div>
    </aside>
  );
}

/* ---------- bottom toolbar ---------- */

const Divider = () => <span className="my-1 w-0.5 shrink-0 border-l border-[#8fa2be] bg-white" />;

function ToolButton({ icon, label, menu, name, className = '' }: { icon: React.ReactNode; label?: string; menu?: boolean; name?: string; className?: string }) {
  return (
    <button className={`flex shrink-0 items-center whitespace-nowrap ${className}`} aria-label={name}>
      {icon}
      {label && <span className="ml-1">{label}</span>}
      {menu && <Caret className="ml-0.5 h-[3px] w-[5px]" />}
    </button>
  );
}

function BottomToolbar() {
  const s = 'size-6 shrink-0';
  return (
    <footer className='mx-[5px] mt-0.5 flex h-9 shrink-0 items-stretch border border-[#c1cbda] bg-linear-to-b from-[#eff1f5] to-[#a8b5c9] pb-px pl-1 font-["Open_Sans",sans-serif] text-[12px]'>
      <ToolButton icon={<HomeIcon className={s} />} label="Home" />
      <ToolButton className="ml-2.5" icon={<ToolsIcon className="h-6 w-[26px]" />} name="Tools" menu />
      <div className="ml-2 flex"><Divider /></div>
      <ToolButton className="ml-2.5" icon={<PersonIcon className={s} body="#3f9a34" edge="#246a1e" hair="#c78a3c" />} label="Find Person..." />
      <ToolButton className="ml-1.5" icon={<CompanyIcon className={s} />} label="Find Company..." />
      <ToolButton className="ml-1.5" icon={<AddressIcon className={s} />} label="Find Address..." />
      <ToolButton className="ml-1.5" icon={<FilesIcon className={s} />} label="Find Files..." />
      <div className="ml-1.5 flex"><Divider /></div>
      <ToolButton className="ml-1.5" icon={<RefreshIcon className={s} />} name="Refresh" />
      <ToolButton className="ml-2.5" icon={<DatabaseIcon className={s} />} name="Database help" />
      <div className="ml-2 flex"><Divider /></div>
      <ToolButton className="ml-2.5" icon={<UpIcon className={s} />} label="Quickstart..." menu />
      <div className="ml-2 flex"><Divider /></div>
      <ToolButton className="ml-2.5" icon={<SphereIcon className={s} />} label="Skins" menu />
      <div className="ml-2 flex"><Divider /></div>
      <ToolButton className="ml-2" icon={<GoIcon className={s} />} name="Go" />
      <label className="my-auto mr-2 ml-2 flex h-[22px] w-0 grow items-center border border-[#8fa2be] bg-white pr-px pl-0.5">
        <input
          className='min-w-0 grow font-["Noto_Sans",sans-serif] outline-none placeholder:text-[#8ea1c1]'
          placeholder="(Click here/Ctrl-Q to Quick Find...)"
          aria-label="Quick Find"
        />
        <button className={`${SMALL_BTN} h-[18px] w-[15px]`} aria-label="Quick Find history">
          <Chevron />
        </button>
      </label>
      <ToolButton icon={<ClipboardIcon className={s} />} name="Tasks" />
      <ToolButton className="ml-2.5" icon={<ClockIcon className={s} />} name="Reminders" />
      <ToolButton className="mr-1 ml-2.5" icon={<CpdIcon className={s} />} />
    </footer>
  );
}

export default function App() {
  return (
    <div className={`flex h-screen flex-col overflow-hidden border-l-2 border-[#34527f] bg-[#94a5c0] text-[11px] text-black ${UI}`}>
      <TitleBar />
      <div className="mr-1 ml-[3px] flex min-h-0 grow flex-col border-r border-l border-[#eef1f5] bg-[#f3f5f8]">
        <DocumentTabs />
        <RibbonTabs />
        <Ribbon />
        <div className="flex min-h-0 grow pt-0.5">
          <div className="w-6 shrink-0 pt-1">
            <button className="h-[53px] w-[22px] rounded-r-[4px] border border-l-0 border-[#93a5c0] bg-linear-to-r from-[#b6c1d2] to-[#eff1f5] text-[11px] [writing-mode:vertical-rl]">
              Options
            </button>
          </div>
          <Editor />
          <FieldsPanel />
        </div>
        <div className="h-[26px] shrink-0 border-t border-b-2 border-[#8fa2be] bg-linear-to-b from-[#eff1f5] to-[#a8b5c9]" />
      </div>
      <BottomToolbar />
      <div className="h-[3px] shrink-0" />
    </div>
  );
}
